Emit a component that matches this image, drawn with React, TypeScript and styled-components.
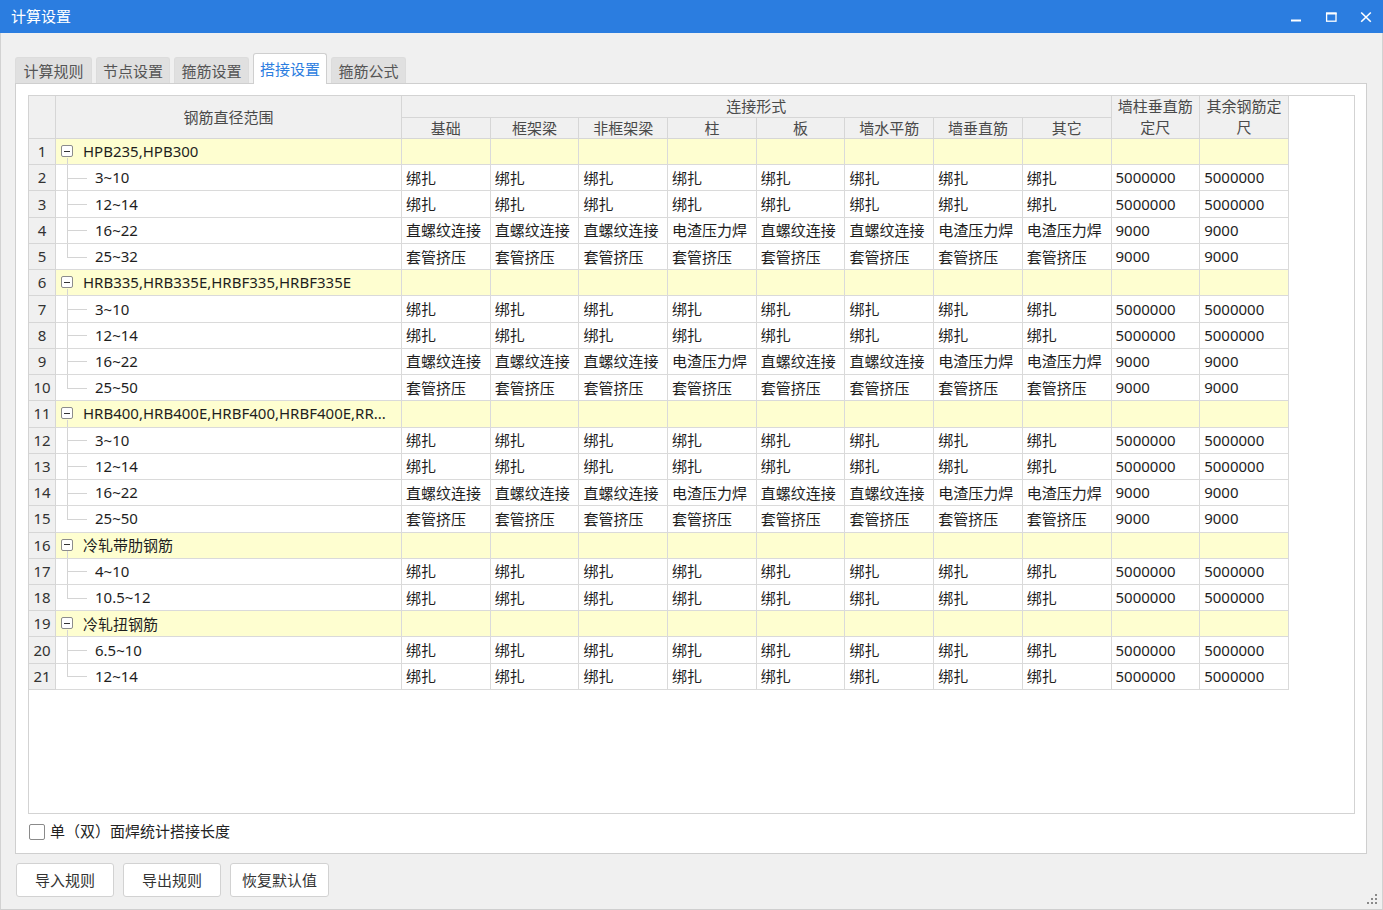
import styled, { createGlobalStyle } from 'styled-components';

interface RowData {
    kind: 'group' | 'child';
    name: string;
    last?: boolean;
    values?: string[];
}

const GlobalStyle = createGlobalStyle`
    html, body {
        margin: 0;
        padding: 0;
        background: #f0f0f0;
    }
    body {
        font-family: "Noto Sans", "Noto Sans CJK SC", sans-serif;
        font-size: 15px;
        color: #1e1e1e;
    }
    * {
        box-sizing: border-box;
    }
`

const WindowStyle = styled.div`
    position: relative;
    width: 1383px;
    height: 910px;
    display: flex;
    flex-direction: column;
    background: #f0f0f0;
    border-left: 1px solid #d2d2d2;
    border-right: 1px solid #d2d2d2;
    border-bottom: 1px solid #cfcfcf;
`

const TitleBarStyle = styled.div`
    height: 33px;
    flex-shrink: 0;
    margin: 0 -1px;
    display: flex;
    align-items: center;
    justify-content: space-between;
    background: #2b7de0;
    color: #fff;
`

const TitleTextStyle = styled.div`
    padding-left: 11px;
    font-size: 15px;
    line-height: 33px;
    margin-top: -1px;
`

const ControlsStyle = styled.div`
    display: flex;
    height: 100%;
`

const ControlButtonStyle = styled.div`
    width: 35px;
    height: 33px;
    display: flex;
    align-items: center;
    justify-content: center;
`

const BodyStyle = styled.div`
    flex: 1;
    display: flex;
    flex-direction: column;
    padding: 20px 15px 12px 14px;
    min-height: 0;
`

const TabRowStyle = styled.div`
    height: 30px;
    flex-shrink: 0;
    display: flex;
    align-items: flex-end;
    gap: 4px;
`

const TabStyle = styled.div<{ $active?: boolean; $width: number }>`
    position: relative;
    z-index: 1;
    width: ${p => p.$width}px;
    height: ${p => (p.$active ? '31px' : '26px')};
    margin-bottom: ${p => (p.$active ? '-1px' : '0')};
    padding-bottom: ${p => (p.$active ? '2px' : '1px')};
    display: flex;
    align-items: center;
    justify-content: center;
    border: 1px solid ${p => (p.$active ? '#cfcfcf' : '#dcdcdc')};
    border-bottom: none;
    border-radius: 3px 3px 0 0;
    background: ${p => (p.$active ? '#ffffff' : '#e0e0e0')};
    color: ${p => (p.$active ? '#2b7de0' : '#555555')};
    font-size: 15px;
    white-space: nowrap;
`

const PanelStyle = styled.div`
    flex: 1;
    min-height: 0;
    display: flex;
    flex-direction: column;
    background: #ffffff;
    border: 1px solid #cfcfcf;
    padding: 11px 11px 0 12px;
`

const GridAreaStyle = styled.div`
    flex: 1;
    min-height: 0;
    background: #ffffff;
    border: 1px solid #d3d3d3;
    overflow: hidden;
`

const TableStyle = styled.div`
    display: grid;
    grid-template-columns: 27px 346px repeat(10, 88.7px);
    grid-template-rows: 22px 21px repeat(21, 26.24px);
    width: max-content;
`

const HeadCellStyle = styled.div<{ $col: string; $row: string }>`
    grid-column: ${p => p.$col};
    grid-row: ${p => p.$row};
    display: flex;
    align-items: center;
    justify-content: center;
    text-align: center;
    background: #f0f0f0;
    border-right: 1px solid #d6d6d6;
    border-bottom: 1px solid #d6d6d6;
    color: #4a4a4a;
    font-size: 15px;
    line-height: 21px;
`

const RowNumStyle = styled.div`
    display: flex;
    align-items: center;
    justify-content: center;
    background: #f0f0f0;
    border-right: 1px solid #d6d6d6;
    border-bottom: 1px solid #d6d6d6;
    color: #333;
    font-size: 15px;
    padding-bottom: 1px;
`

const CellStyle = styled.div<{ $group?: boolean }>`
    display: flex;
    align-items: center;
    padding-left: 4px;
    padding-bottom: 1px;
    background: ${p => (p.$group ? '#fefed0' : '#ffffff')};
    border-right: 1px solid #dadada;
    border-bottom: 1px solid #dadada;
    white-space: nowrap;
    overflow: hidden;
    font-size: 15px;
    color: #1e1e1e;
`

const TreeCellStyle = styled.div<{ $kind: 'group' | 'child'; $last?: boolean }>`
    position: relative;
    display: flex;
    align-items: center;
    gap: 10px;
    padding-left: ${p => (p.$kind === 'group' ? '5px' : '39px')};
    padding-bottom: 1px;
    background: ${p => (p.$kind === 'group' ? '#fefed0' : '#ffffff')};
    border-right: 1px solid #dadada;
    border-bottom: 1px solid #dadada;
    white-space: nowrap;
    overflow: hidden;
    font-size: 15px;
    color: #1e1e1e;

    &::before {
        content: '';
        display: ${p => (p.$kind === 'child' ? 'block' : 'none')};
        position: absolute;
        left: 11px;
        top: 0;
        bottom: ${p => (p.$last ? '50%' : '-1px')};
        width: 1px;
        background: #d4d4d4;
    }

    &::after {
        content: '';
        position: absolute;
        left: 11px;
        ${p => p.$kind === 'child'
            ? 'top: 50%; width: 20px; height: 1px;'
            : 'top: calc(50% + 6px); bottom: -1px; width: 1px;'}
        background: #d4d4d4;
    }
`

const ExpandBoxStyle = styled.span`
    width: 12px;
    height: 12px;
    flex-shrink: 0;
    display: flex;
    align-items: center;
    justify-content: center;
    border: 1px solid #8c8c8c;
    border-radius: 2px;
    background: #fff;

    &::before {
        content: '';
        width: 6px;
        height: 1px;
        background: #333;
    }
`

const CheckRowStyle = styled.div`
    flex-shrink: 0;
    display: flex;
    align-items: center;
    gap: 5px;
    padding: 9px 0 13px 1px;
    font-size: 15px;
    color: #222;
    line-height: 17px;
`

const CheckboxStyle = styled.span`
    width: 16px;
    height: 16px;
    border: 1px solid #8a8a8a;
    border-radius: 2px;
    background: #fff;
`

const ButtonRowStyle = styled.div`
    flex-shrink: 0;
    display: flex;
    gap: 9px;
    margin-top: 9px;
    padding-left: 1px;
`

const ButtonStyle = styled.div<{ $width: number }>`
    width: ${p => p.$width}px;
    height: 34px;
    display: flex;
    align-items: center;
    justify-content: center;
    padding-bottom: 2px;
    background: #ffffff;
    border: 1px solid #d2d2d2;
    border-radius: 3px;
    color: #333;
    font-size: 15px;
`

const GripStyle = styled.svg`
    position: absolute;
    right: 4px;
    bottom: 4px;
`

const tabs = [
    { name: '计算规则', width: 77 },
    { name: '节点设置', width: 74 },
    { name: '箍筋设置', width: 75 },
    { name: '搭接设置', width: 74 },
    { name: '箍筋公式', width: 75 },
];
const subHeads = ['基础', '框架梁', '非框架梁', '柱', '板', '墙水平筋', '墙垂直筋', '其它'];

const tie = ['绑扎', '绑扎', '绑扎', '绑扎', '绑扎', '绑扎', '绑扎', '绑扎', '5000000', '5000000'];
const screw = ['直螺纹连接', '直螺纹连接', '直螺纹连接', '电渣压力焊', '直螺纹连接', '直螺纹连接', '电渣压力焊', '电渣压力焊', '9000', '9000'];
const sleeve = ['套管挤压', '套管挤压', '套管挤压', '套管挤压', '套管挤压', '套管挤压', '套管挤压', '套管挤压', '9000', '9000'];

const rows: RowData[] = [
    { kind: 'group', name: 'HPB235,HPB300' },
    { kind: 'child', name: '3~10', values: tie },
    { kind: 'child', name: '12~14', values: tie },
    { kind: 'child', name: '16~22', values: screw },
    { kind: 'child', name: '25~32', values: sleeve, last: true },
    { kind: 'group', name: 'HRB335,HRB335E,HRBF335,HRBF335E' },
    { kind: 'child', name: '3~10', values: tie },
    { kind: 'child', name: '12~14', values: tie },
    { kind: 'child', name: '16~22', values: screw },
    { kind: 'child', name: '25~50', values: sleeve, last: true },
    { kind: 'group', name: 'HRB400,HRB400E,HRBF400,HRBF400E,RR...' },
    { kind: 'child', name: '3~10', values: tie },
    { kind: 'child', name: '12~14', values: tie },
    { kind: 'child', name: '16~22', values: screw },
    { kind: 'child', name: '25~50', values: sleeve, last: true },
    { kind: 'group', name: '冷轧带肋钢筋' },
    { kind: 'child', name: '4~10', values: tie },
    { kind: 'child', name: '10.5~12', values: tie, last: true },
    { kind: 'group', name: '冷轧扭钢筋' },
    { kind: 'child', name: '6.5~10', values: tie },
    { kind: 'child', name: '12~14', values: tie, last: true },
];

const App = () => {
    return (
        <>
            <GlobalStyle />
            <WindowStyle>
                <TitleBarStyle>
                    <TitleTextStyle>计算设置</TitleTextStyle>
                    <ControlsStyle>
                        <ControlButtonStyle>
                            <svg width="12" height="12" viewBox="0 0 12 12">
                                <rect x="1" y="8.5" width="10" height="2" fill="#fff" />
                            </svg>
                        </ControlButtonStyle>
                        <ControlButtonStyle>
                            <svg width="12" height="12" viewBox="0 0 12 12">
                                <rect x="1.6" y="2.2" width="9.4" height="8" fill="none" stroke="#fff" strokeWidth="1.3" />
                                <rect x="1" y="1.5" width="10.6" height="2" fill="#fff" />
                            </svg>
                        </ControlButtonStyle>
                        <ControlButtonStyle>
                            <svg width="12" height="12" viewBox="0 0 12 12">
                                <path d="M1.2 1.5 L10.8 10.8 M10.8 1.5 L1.2 10.8" stroke="#fff" strokeWidth="1.6" />
                            </svg>
                        </ControlButtonStyle>
                    </ControlsStyle>
                </TitleBarStyle>

                <BodyStyle>
                    <TabRowStyle>
                        {tabs.map(t => (
                            <TabStyle key={t.name} $width={t.width} $active={t.name === '搭接设置'}>{t.name}</TabStyle>
                        ))}
                    </TabRowStyle>

                    <PanelStyle>
                        <GridAreaStyle>
                            <TableStyle>
                                <HeadCellStyle $col="1" $row="1 / span 2" />
                                <HeadCellStyle $col="2" $row="1 / span 2">钢筋直径范围</HeadCellStyle>
                                <HeadCellStyle $col="3 / span 8" $row="1">连接形式</HeadCellStyle>
                                {subHeads.map((h, i) => (
                                    <HeadCellStyle key={h} $col={String(i + 3)} $row="2">{h}</HeadCellStyle>
                                ))}
                                <HeadCellStyle $col="11" $row="1 / span 2">墙柱垂直筋<br />定尺</HeadCellStyle>
                                <HeadCellStyle $col="12" $row="1 / span 2">其余钢筋定<br />尺</HeadCellStyle>

                                {rows.map((r, i) => (
                                    <RowCells key={i} index={i + 1} row={r} />
                                ))}
                            </TableStyle>
                        </GridAreaStyle>

                        <CheckRowStyle>
                            <CheckboxStyle />
                            <span>单（双）面焊统计搭接长度</span>
                        </CheckRowStyle>
                    </PanelStyle>

                    <ButtonRowStyle>
                        <ButtonStyle $width={98}>导入规则</ButtonStyle>
                        <ButtonStyle $width={98}>导出规则</ButtonStyle>
                        <ButtonStyle $width={99}>恢复默认值</ButtonStyle>
                    </ButtonRowStyle>
                </BodyStyle>

                <GripStyle width="11" height="11" viewBox="0 0 11 11">
                    <rect x="8" y="0" width="2" height="2" fill="#8a8a8a" />
                    <rect x="4" y="4" width="2" height="2" fill="#8a8a8a" />
                    <rect x="8" y="4" width="2" height="2" fill="#8a8a8a" />
                    <rect x="0" y="8" width="2" height="2" fill="#8a8a8a" />
                    <rect x="4" y="8" width="2" height="2" fill="#8a8a8a" />
                    <rect x="8" y="8" width="2" height="2" fill="#8a8a8a" />
                </GripStyle>
            </WindowStyle>
        </>
    )
}

const RowCells = ({ index, row }: { index: number; row: RowData }) => {
    const isGroup = row.kind === 'group';
    const values = row.values ?? Array(10).fill('');
    return (
        <>
            <RowNumStyle>{index}</RowNumStyle>
            <TreeCellStyle $kind={row.kind} $last={row.last}>
                {isGroup && <ExpandBoxStyle />}
                <span>{row.name}</span>
            </TreeCellStyle>
            {values.map((v, j) => (
                <CellStyle key={j} $group={isGroup}>{v}</CellStyle>
            ))}
        </>
    )
}

export default App;
